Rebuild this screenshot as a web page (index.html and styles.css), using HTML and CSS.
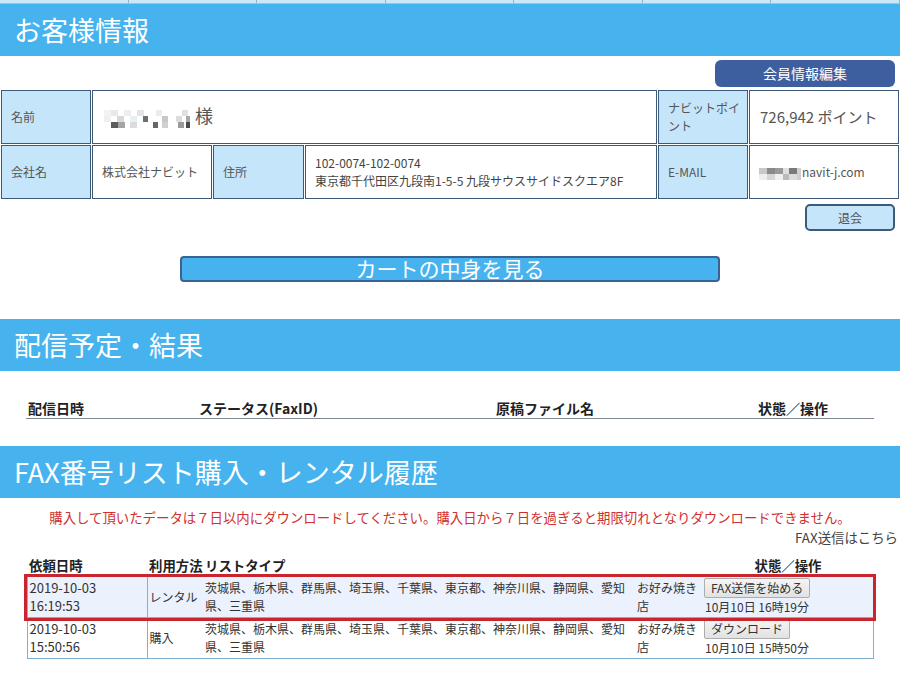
FILE: index.html
```html
<!DOCTYPE html>
<html lang="ja">
<head>
    <meta charset="UTF-8">
    <title>マイページ</title>
    <link rel="stylesheet" href="styles.css">
</head>
<body>
<div class="page">

    <div class="topnav">
        <span></span><span></span><span></span><span></span><span></span><span></span><span></span>
    </div>

    <h2 class="band">お客様情報</h2>

    <div class="tools">
        <a href="#" class="btn-edit">会員情報編集</a>
    </div>

    <table class="member">
        <colgroup>
            <col style="width:90px"><col style="width:120px"><col style="width:91px">
            <col style="width:352px"><col style="width:90px"><col style="width:150px">
        </colgroup>
        <tr>
            <th>名前</th>
            <td colspan="3" class="name">
                <svg class="mosaic" width="86" height="18" viewBox="0 0 86 18">
                    <rect x="0" y="0" width="7" height="6" fill="#f3f3f3"/>
                    <rect x="7" y="0" width="7" height="6" fill="#e9e9e9"/>
                    <rect x="20" y="0" width="7" height="6" fill="#eeeeee"/>
                    <rect x="33" y="0" width="7" height="6" fill="#e4e4e4"/>
                    <rect x="52" y="0" width="6" height="6" fill="#ececec"/>
                    <rect x="78" y="0" width="6" height="6" fill="#e0e0e0"/>
                    <rect x="0" y="6" width="7" height="6" fill="#f0f0f0"/>
                    <rect x="13" y="6" width="7" height="6" fill="#d8d8d8"/>
                    <rect x="26" y="6" width="7" height="6" fill="#e8f0f4"/>
                    <rect x="39" y="6" width="5" height="6" fill="#6e6e6e"/>
                    <rect x="58" y="6" width="6" height="6" fill="#c8c8c8"/>
                    <rect x="72" y="6" width="6" height="6" fill="#dddddd"/>
                    <rect x="82" y="6" width="4" height="6" fill="#a8a8a8"/>
                    <rect x="7" y="12" width="7" height="6" fill="#5c5c5c"/>
                    <rect x="14" y="12" width="7" height="6" fill="#a5a5a5"/>
                    <rect x="26" y="12" width="7" height="6" fill="#dcdcdc"/>
                    <rect x="49" y="12" width="5" height="6" fill="#666666"/>
                    <rect x="58" y="12" width="6" height="6" fill="#d0d0d0"/>
                    <rect x="74" y="12" width="6" height="6" fill="#9a9a9a"/>
                    <rect x="82" y="12" width="4" height="6" fill="#4a4a4a"/>
                </svg>様
            </td>
            <th>ナビットポイント</th>
            <td class="points">726,942 ポイント</td>
        </tr>
        <tr>
            <th>会社名</th>
            <td>株式会社ナビット</td>
            <th>住所</th>
            <td class="address">102-0074-102-0074<br>東京都千代田区九段南1-5-5 九段サウスサイドスクエア8F</td>
            <th>E-MAIL</th>
            <td class="mail">
                <svg class="mosaic" width="42" height="12" viewBox="0 0 42 12">
                    <rect x="0" y="0" width="8" height="6" fill="#c8c8c8"/>
                    <rect x="8" y="0" width="8" height="6" fill="#8a8a8a"/>
                    <rect x="16" y="0" width="8" height="6" fill="#9a9a9a"/>
                    <rect x="24" y="0" width="6" height="6" fill="#e0e0e0"/>
                    <rect x="30" y="0" width="8" height="6" fill="#7a7a7a"/>
                    <rect x="0" y="6" width="8" height="6" fill="#eeeeee"/>
                    <rect x="8" y="6" width="8" height="6" fill="#d6d6d6"/>
                    <rect x="16" y="6" width="8" height="6" fill="#f0f0f0"/>
                    <rect x="24" y="6" width="6" height="6" fill="#bbbbbb"/>
                    <rect x="30" y="6" width="8" height="6" fill="#dcdcdc"/>
                    <rect x="38" y="0" width="4" height="12" fill="#cfcfcf"/>
                </svg>navit-j.com
            </td>
        </tr>
    </table>

    <div class="tools tools-quit">
        <a href="#" class="btn-quit">退会</a>
    </div>

    <div class="cart">
        <a href="#" class="btn-cart">カートの中身を見る</a>
    </div>

    <h2 class="band">配信予定・結果</h2>

    <table class="delivery">
        <colgroup>
            <col style="width:171px"><col style="width:297px"><col style="width:262px"><col>
        </colgroup>
        <tr>
            <th>配信日時</th>
            <th>ステータス(FaxID)</th>
            <th>原稿ファイル名</th>
            <th>状態／操作</th>
        </tr>
    </table>

    <h2 class="band">FAX番号リスト購入・レンタル履歴</h2>

    <p class="notice">購入して頂いたデータは７日以内にダウンロードしてください。購入日から７日を過ぎると期限切れとなりダウンロードできません。</p>
    <p class="fax-link"><a href="#">FAX送信はこちら</a></p>

    <table class="history">
        <colgroup>
            <col style="width:120px"><col style="width:56px"><col style="width:432px">
            <col style="width:68px"><col style="width:170px">
        </colgroup>
        <tr>
            <th>依頼日時</th>
            <th>利用方法</th>
            <th>リストタイプ</th>
            <th></th>
            <th class="state">状態／操作</th>
        </tr>
        <tr class="selected">
            <td class="date">2019-10-03<br>16:19:53</td>
            <td>レンタル</td>
            <td>茨城県、栃木県、群馬県、埼玉県、千葉県、東京都、神奈川県、静岡県、愛知県、三重県</td>
            <td>お好み焼き店</td>
            <td class="state">
                <button type="button">FAX送信を始める</button>
                <span class="limit">10月10日 16時19分</span>
            </td>
        </tr>
        <tr>
            <td class="date">2019-10-03<br>15:50:56</td>
            <td>購入</td>
            <td>茨城県、栃木県、群馬県、埼玉県、千葉県、東京都、神奈川県、静岡県、愛知県、三重県</td>
            <td>お好み焼き店</td>
            <td class="state">
                <button type="button">ダウンロード</button>
                <span class="limit">10月10日 15時50分</span>
            </td>
        </tr>
    </table>

</div>
</body>
</html>
```

FILE: styles.css
```css
body {
    margin: 0;
    font-family: "Noto Sans CJK JP", sans-serif;
    font-size: 13px;
    color: #333;
    background: #fff;
}

.page {
    width: 900px;
}

/* cut-off global menu */
.topnav {
    display: flex;
    height: 3px;
    background: #cbe8f7;
    border-bottom: 1px solid #92c8e4;
}

.topnav span {
    flex: 1;
    border-right: 1px solid #9fb3bf;
}

/* section headings */
.band {
    margin: 0;
    height: 52px;
    line-height: 52px;
    padding-left: 14px;
    background: #46b3ef;
    color: #fff;
    font-size: 27px;
    font-weight: normal;
}

.tools {
    display: flex;
    justify-content: flex-end;
    padding-right: 5px;
    margin-top: 4px;
}

.btn-edit {
    width: 180px;
    height: 27px;
    line-height: 27px;
    border-radius: 6px;
    background: #3e5f9f;
    color: #fff;
    font-size: 14px;
    text-align: center;
    text-decoration: none;
}

.btn-quit {
    width: 90px;
    height: 27px;
    box-sizing: border-box;
    line-height: 23px;
    border: 2px solid #3d5a78;
    border-radius: 5px;
    background: #c5e5fb;
    color: #555;
    font-size: 12px;
    text-align: center;
    text-decoration: none;
}

/* member info */
.member {
    width: 900px;
    table-layout: fixed;
    border-spacing: 1px;
    margin-top: 2px;
    font-size: 12px;
    color: #555;
}

.member th,
.member td {
    height: 54px;
    box-sizing: border-box;
    border: 1px solid #3d5a78;
    line-height: 18px;
    vertical-align: middle;
}

.member th {
    background: #c5e5fb;
    font-weight: normal;
    text-align: left;
    padding: 0 0 0 9px;
}

.member td {
    padding: 0 9px;
}

.member .name {
    font-size: 18px;
    padding-left: 11px;
}

.member .points {
    font-size: 15px;
    padding-left: 10px;
}

.member .address {
    color: #444;
}

.mosaic {
    vertical-align: middle;
    margin-right: 5px;
}

.member .mail .mosaic {
    margin: 0 1px 0 0;
}

/* cart */
.cart {
    display: flex;
    justify-content: center;
    margin: 25px 0 37px;
}

.btn-cart {
    width: 540px;
    height: 26px;
    box-sizing: border-box;
    border: 2px solid #3a6391;
    border-radius: 4px;
    background: #46b3ef;
    color: #fff;
    font-size: 21px;
    line-height: 21px;
    text-align: center;
    text-decoration: none;
}

/* delivery schedule */
.delivery {
    width: 848px;
    margin: 27px auto 27px;
    border-collapse: collapse;
    table-layout: fixed;
}

.delivery th {
    padding: 0 2px;
    line-height: 20px;
    font-size: 14px;
    color: #222;
    text-align: left;
    border-bottom: 1px solid #7f8694;
}

/* purchase history */
.notice {
    margin: 9px 0 0;
    line-height: 20px;
    font-size: 13.4px;
    color: #d0302f;
    text-align: center;
}

.fax-link {
    margin: 0;
    padding-right: 2px;
    line-height: 20px;
    font-size: 13.4px;
    text-align: right;
}

.fax-link a {
    color: #444;
    text-decoration: none;
}

.history {
    width: 846px;
    margin: 7px auto 0;
    border-collapse: collapse;
    table-layout: fixed;
    font-size: 12px;
    color: #333;
}

.history th {
    padding: 1px 2px;
    line-height: 20px;
    font-size: 13.4px;
    color: #222;
    text-align: left;
    white-space: nowrap;
}

.history th.state {
    text-align: center;
}

.history td {
    padding: 1px 2px;
    line-height: 18px;
    vertical-align: middle;
    border-top: 1px solid #7db3d2;
    border-bottom: 1px solid #7db3d2;
}

.history td.date {
    font-size: 13px;
    border-left: 1px solid #7db3d2;
    border-right: 1px solid #7db3d2;
}

.history td.state {
    padding-left: 1px;
    border-right: 1px solid #7db3d2;
}

.history tr.selected {
    background: #ebf1fd;
    outline: 3px solid #c9252e;
}

.history button {
    display: block;
    height: 20px;
    padding: 0 6px;
    border: 1px solid #adadad;
    border-radius: 2px;
    background: linear-gradient(#f5f5f5, #e2e2e2);
    font-family: "Noto Sans CJK JP", sans-serif;
    font-size: 12px;
    line-height: 18px;
    color: #333;
}

.history .limit {
    display: block;
    padding-left: 1px;
}
```
